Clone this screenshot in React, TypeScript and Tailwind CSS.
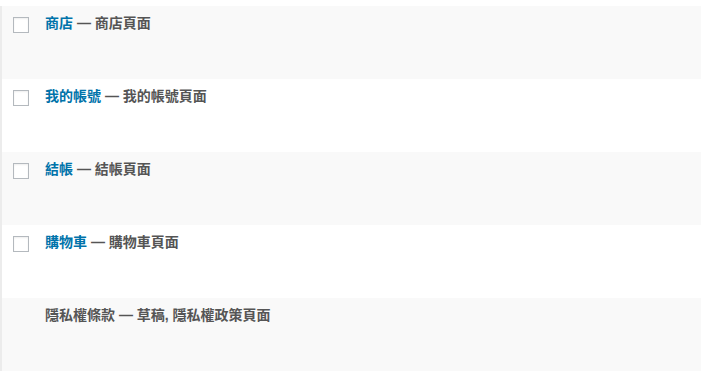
import React from 'react';

interface PageRow {
  title: string;
  state: string;
  checkbox: boolean;
  linked: boolean;
}

const rows: PageRow[] = [
  { title: '商店', state: '商店頁面', checkbox: true, linked: true },
  { title: '我的帳號', state: '我的帳號頁面', checkbox: true, linked: true },
  { title: '結帳', state: '結帳頁面', checkbox: true, linked: true },
  { title: '購物車', state: '購物車頁面', checkbox: true, linked: true },
  { title: '隱私權條款', state: '草稿, 隱私權政策頁面', checkbox: false, linked: false },
];

const App = () => {
  return (
    <div
      className="w-[701px] h-[371px] overflow-hidden bg-white pt-[6px]"
      style={{ fontFamily: '"Liberation Sans", "Noto Sans CJK TC", sans-serif' }}
    >
      <div className="border-l-2 border-[#ececec]">
        {rows.map((row, i) => (
          <div
            key={row.title}
            className={`flex items-start h-[73px] pl-[11px] pt-[11px] ${i % 2 === 0 ? 'bg-[#f9f9f9]' : 'bg-white'}`}
          >
            <div className="w-4 h-4 shrink-0">
              {row.checkbox && (
                <div className="w-4 h-4 border border-[#b4b9be] bg-white shadow-[inset_0_1px_2px_rgba(0,0,0,0.07)]" />
              )}
            </div>
            <div className="ml-4 -mt-[4px] text-[14px] leading-[20px] font-semibold text-[#555]">
              {row.linked ? (
                <span className="text-[#0073aa]">{row.title}</span>
              ) : (
                <span>{row.title}</span>
              )}
              {' — '}
              {row.state}
            </div>
          </div>
        ))}
      </div>
    </div>
  );
};

export default App;
